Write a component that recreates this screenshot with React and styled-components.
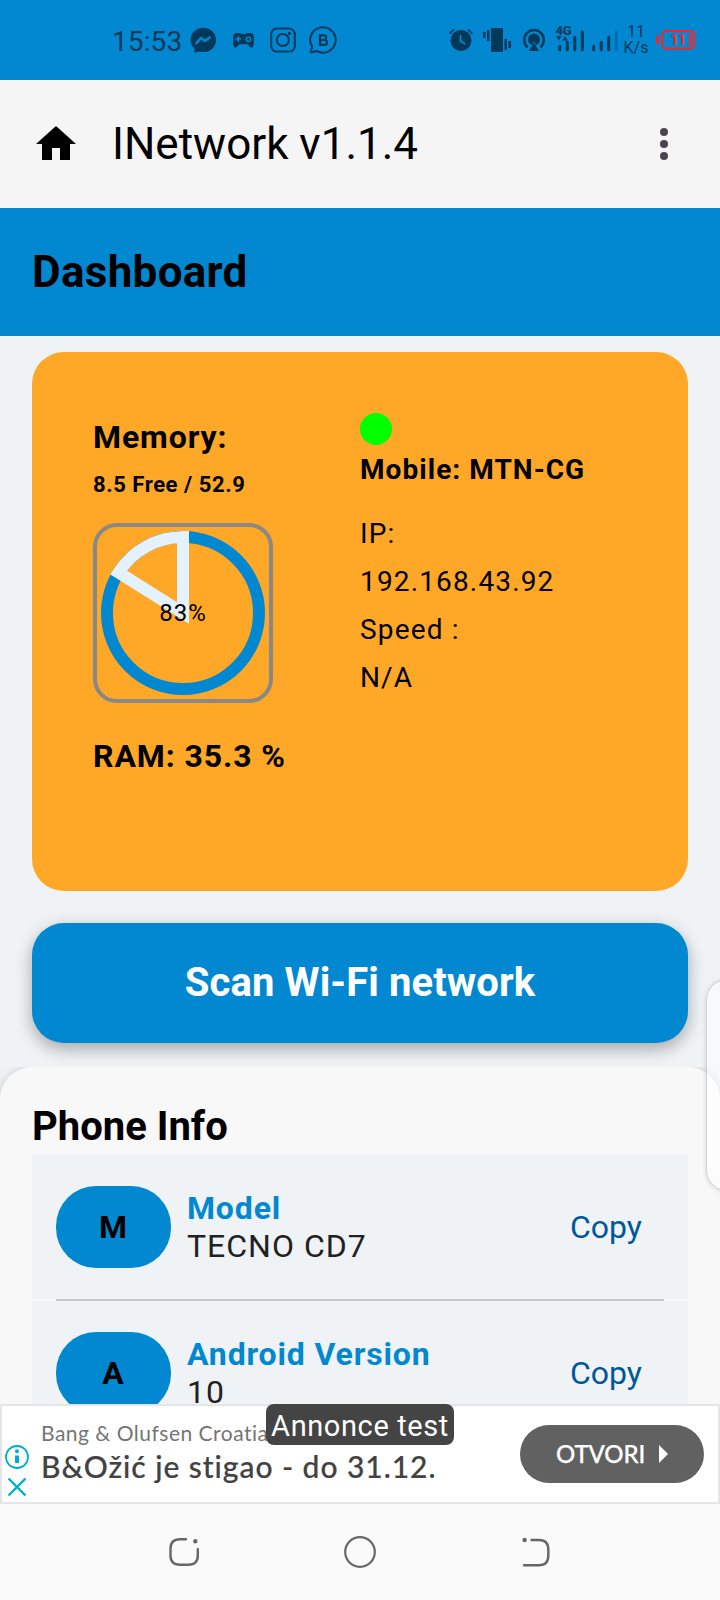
import React from "react";
import styled, { createGlobalStyle } from "styled-components";

const BLUE = "#0288d1";
const INK = "#01395a";

const phoneInfo = [
  { letter: "M", label: "Model", value: "TECNO CD7" },
  { letter: "A", label: "Android Version", value: "10" },
];

const LeftStatusIcons = () => (
  <svg width="148" height="30" viewBox="190 25 148 30" fill="none">
    {/* messenger */}
    <path
      d="M203.3 27.8c-7.2 0-12.7 5.2-12.7 12.2 0 3.6 1.5 6.4 3.9 8.5v4.4l4.3-1.4c1.4.4 2.9.6 4.5.6 7.2 0 12.7-5.2 12.7-12.2s-5.5-12.1-12.7-12.1Z"
      fill={INK}
    />
    <path d="M196.4 43.2l4.5-5.2 4 3 4.8-3.5" stroke={BLUE} strokeWidth="2.5" strokeLinejoin="round" strokeLinecap="round" />
    {/* gamepad */}
    <path
      d="M236.5 33h3.5l1.5 1h4l1.5-1h3.5c2.5 0 3.5 2 3.5 6 0 5.5-.5 8.7-2.5 8.7-2 0-3-3.4-4.5-3.4h-7c-1.5 0-2.5 3.4-4.5 3.4-2 0-2.5-3.2-2.5-8.7 0-4 1-6 3.5-6Z"
      fill={INK}
    />
    <path d="M238.3 36.3v5.4M235.6 39h5.4" stroke={BLUE} strokeWidth="1.7" />
    <circle cx="248.4" cy="39.3" r="2.2" stroke={BLUE} strokeWidth="1.4" />
    {/* instagram */}
    <rect x="271.2" y="28.6" width="23.6" height="23" rx="5.5" stroke={INK} strokeWidth="2" />
    <circle cx="282.8" cy="40" r="6" stroke={INK} strokeWidth="2" />
    <circle cx="289.5" cy="33.5" r="1.7" fill={INK} />
    {/* business chat */}
    <path d="M310.6 52.4l1.6-5.700a12.7 12.7 0 1 1 4.7 4.4Z" stroke={INK} strokeWidth="2" strokeLinejoin="round" />
    <path d="M320 35.3h3.8a2.3 2.3 0 0 1 0 4.7H320Zm0 4.700h4.5a2.45 2.45 0 0 1 0 4.900H320Z" stroke={INK} strokeWidth="2.2" />
  </svg>
);

const RightStatusIcons = () => (
  <svg width="171" height="40" viewBox="449 20 171 40" fill="none">
    {/* alarm */}
    <circle cx="461" cy="40.5" r="10.5" fill={INK} />
    <path d="M460.5 35v6l4.8 3" stroke={BLUE} strokeWidth="1.7" />
    <path d="M449.7 33.7l4.3-4.3M472.3 33.7l-4.3-4.3" stroke={INK} strokeWidth="1.8" />
    {/* vibrate */}
    <path d="M491 28h12v24h-12ZM483 32h2.5v6H483ZM487 30h2.5v11H487ZM504.5 39h2.5v11h-2.5ZM508.5 41h2.5v7h-2.5Z" fill={INK} />
    {/* hotspot */}
    <path d="M527.6 47.3a9.8 9.8 0 1 1 12.8 0" stroke={INK} strokeWidth="2.5" />
    <circle cx="534" cy="39.5" r="6" fill={INK} />
    <path d="M527.5 53l6.5-11.5 6.5 11.5Z" fill={BLUE} />
    <path d="M528.8 51l5.2-8.3 5.2 8.3Z" fill={INK} />
    {/* signal bars */}
    <text x="555.5" y="34.8" fontSize="13" fontWeight="800" letterSpacing="-0.3" fill={INK} fontFamily="Roboto, sans-serif">
      4G
    </text>
    <path d="M556 36h5.5l-2.7 4.5ZM562.3 40.5h5.4l-2.7-4.5Z" fill={INK} />
    <path d="M559.8 46.2v3.6M567.3 42.2v7.6M574.8 37.2v12.6M582.3 31.8v18" stroke={INK} strokeWidth="3" strokeLinecap="round" />
    <path d="M593.7 46.2v3.6M601.2 42.2v7.6M608.7 37.2v12.6" stroke={INK} strokeWidth="3" strokeLinecap="round" />
    <path d="M616.3 31.8v18" stroke="#026eab" strokeWidth="3" strokeLinecap="round" />
  </svg>
);

const Battery = () => (
  <svg width="40" height="20" viewBox="656 30 40 20" fill="none">
    <rect x="656" y="35.5" width="3" height="8.5" rx="1" fill="#ff2222" />
    <rect x="662.2" y="31" width="32" height="17.5" rx="3.5" stroke="#ff2222" strokeWidth="2" />
    <text x="670" y="45" fontSize="15" fontWeight="700" letterSpacing="-0.8" fill="#ff2222" fontFamily="Roboto, sans-serif">
      11
    </text>
    <path d="M690.5 33.5v12.5" stroke="#ff2222" strokeWidth="2.6" />
  </svg>
);

const HomeIcon = () => (
  <svg width="40" height="36" viewBox="0 0 40 36">
    <path d="M20 0 0 18h6v16h10V22h8v12h10V18h6Z" />
  </svg>
);

const MenuDots = () => (
  <svg width="8" height="32" viewBox="0 0 8 32" fill="#49454f">
    <circle cx="4" cy="4" r="4" />
    <circle cx="4" cy="16" r="4" />
    <circle cx="4" cy="28" r="4" />
  </svg>
);

const MemoryChart = ({ free, total }) => {
  const used = 1 - free / total;
  const angle = used * 2 * Math.PI;
  const x = 86 + 76 * Math.sin(angle);
  const y = 86 - 76 * Math.cos(angle);
  return (
    <ChartFrame>
      <svg width="172" height="172" viewBox="0 0 172 172" fill="none" strokeWidth="12">
        <circle cx="86" cy="86" r="76" stroke={BLUE} />
        <path d={`M86 86L${x} ${y}A76 76 0 0 1 86 10Z`} stroke="#e3f2fd" />
      </svg>
      <ChartLabel>{Math.floor(used * 100)}%</ChartLabel>
    </ChartFrame>
  );
};

const InfoRow = ({ letter, label, value }) => (
  <Row>
    <Badge>{letter}</Badge>
    <RowText>
      <RowLabel>{label}</RowLabel>
      <RowValue>{value}</RowValue>
    </RowText>
    <CopyButton>Copy</CopyButton>
  </Row>
);

const AdBanner = () => (
  <Ad>
    <AdMarks>
      <svg width="26" height="54" viewBox="0 0 26 54" fill="none" stroke="#00aecd">
        <circle cx="13" cy="13" r="11" strokeWidth="1.8" />
        <circle cx="13" cy="7.3" r="2" fill="#00aecd" stroke="none" />
        <path d="M11 11.5h4v7.5h-4Z" fill="#00aecd" stroke="none" />
        <path d="M4.5 34.5l17 17M21.5 34.5l-17 17" strokeWidth="2.4" />
      </svg>
    </AdMarks>
    <AdCopy>
      <Advertiser>Bang &amp; Olufsen Croatia</Advertiser>
      <Headline>B&amp;Ožić je stigao - do 31.12.</Headline>
    </AdCopy>
    <AdAction>
      OTVORI
      <svg width="9" height="18" viewBox="0 0 9 18" fill="#fff">
        <path d="M0 0 9 9 0 18Z" />
      </svg>
    </AdAction>
    <TestTag>Annonce test</TestTag>
  </Ad>
);

function App() {
  return (
    <Screen>
      <GlobalStyle />
      <StatusBar>
        <Clock>15:53</Clock>
        <LeftStatusIcons />
        <Spacer />
        <RightStatusIcons />
        <NetSpeed>
          <span>11</span>
          <span>K/s</span>
        </NetSpeed>
        <Battery />
      </StatusBar>
      <AppBar>
        <HomeIcon />
        <AppTitle>INetwork v1.1.4</AppTitle>
        <Spacer />
        <MenuDots />
      </AppBar>
      <PageTitle>Dashboard</PageTitle>
      <Content>
        <Card>
          <MemoryColumn>
            <CardHeading>Memory:</CardHeading>
            <MemoryFree>8.5 Free / 52.9</MemoryFree>
            <MemoryChart free={8.5} total={52.9} />
            <CardHeading $ram>RAM: 35.3 %</CardHeading>
          </MemoryColumn>
          <NetworkColumn>
            <Dot />
            <Carrier>Mobile: MTN-CG</Carrier>
            <NetworkLine>IP:</NetworkLine>
            <NetworkLine>192.168.43.92</NetworkLine>
            <NetworkLine>Speed :</NetworkLine>
            <NetworkLine>N/A</NetworkLine>
          </NetworkColumn>
        </Card>
        <ScanButton>Scan Wi-Fi network</ScanButton>
      </Content>
      <PanelClip>
        <Panel>
          <PanelTitle>Phone Info</PanelTitle>
          {phoneInfo.map((item, i) => (
            <React.Fragment key={item.label}>
              {i > 0 && <Divider />}
              <InfoRow {...item} />
            </React.Fragment>
          ))}
        </Panel>
      </PanelClip>
      <AdBanner />
      <NavBar>
        <svg width="32" height="32" viewBox="168 1536 32 32" fill="none" stroke="#666" strokeWidth="2.4" strokeLinecap="round">
          <path d="M186 1539.2h-6c-6 0-9.5 3.5-9.5 9.5v6.8c0 6 3.5 9.2 9.5 9.2h8.3c6 0 9.5-3.2 9.5-9.2v-6.3" />
          <circle cx="195.3" cy="1541.3" r="1" fill="#666" />
        </svg>
        <svg width="32" height="32" viewBox="344 1536 32 32" fill="none" stroke="#666" strokeWidth="2.2">
          <circle cx="360" cy="1552" r="14.8" />
        </svg>
        <svg width="32" height="32" viewBox="520 1536 32 32" fill="none" stroke="#666" strokeWidth="2.4" strokeLinecap="round">
          <path d="M531.5 1540h7.5c6 0 9.3 3.5 9.3 9.5v6.3c0 6-3.3 9.5-9.3 9.5h-15" />
          <circle cx="524.6" cy="1540" r="1" fill="#666" />
        </svg>
      </NavBar>
      <EdgeHandle />
    </Screen>
  );
}

const GlobalStyle = createGlobalStyle`
  * {
    box-sizing: border-box;
  }
  body {
    margin: 0;
  }
  svg {
    display: block;
    flex-shrink: 0;
  }
`;

const Screen = styled.div`
  position: relative;
  display: flex;
  flex-direction: column;
  width: 720px;
  height: 1600px;
  overflow: hidden;
  background: #eff3f6;
  color: #000;
  font-family: Roboto, sans-serif;
`;

const Spacer = styled.div`
  flex: 1;
`;

const StatusBar = styled.div`
  display: flex;
  align-items: center;
  height: 80px;
  padding: 0 24px 0 112px;
  background: ${BLUE};
  color: ${INK};
`;

const Clock = styled.div`
  width: 78px;
  padding-top: 3px;
  font-size: 28px;
  line-height: 32px;
  letter-spacing: 0.1px;
`;

const NetSpeed = styled.div`
  display: flex;
  flex-direction: column;
  align-items: center;
  width: 36px;
  padding-right: 4px;
  font-size: 16px;
  line-height: 16px;
`;

const AppBar = styled.div`
  display: flex;
  align-items: center;
  height: 128px;
  padding: 0 52px 0 36px;
  background: #f5f5f5;
`;

const AppTitle = styled.div`
  margin-left: 36px;
  font-size: 44px;
  line-height: 56px;
`;

const PageTitle = styled.div`
  height: 128px;
  padding-left: 32px;
  background: ${BLUE};
  font-size: 44px;
  font-weight: 700;
  line-height: 128px;
  letter-spacing: 0.3px;
`;

const Content = styled.div`
  height: 731px;
  padding: 16px 32px 0;
`;

const Card = styled.div`
  display: flex;
  height: 539px;
  border-radius: 32px;
  background: #ffa726;
`;

const MemoryColumn = styled.div`
  width: 328px;
  padding: 65px 0 0 61px;
`;

const CardHeading = styled.div`
  margin-top: ${(props) => (props.$ram ? "33px" : "0")};
  font-size: 32px;
  font-weight: 700;
  line-height: 40px;
  letter-spacing: 0.9px;
`;

const MemoryFree = styled.div`
  margin: 13px 0 24px;
  font-size: 22px;
  font-weight: 700;
  line-height: 29px;
  letter-spacing: 0.57px;
`;

const ChartFrame = styled.div`
  position: relative;
  width: 180px;
  height: 180px;
  border: 4px solid #888;
  border-radius: 24px;
`;

const ChartLabel = styled.div`
  position: absolute;
  inset: 0;
  font-size: 24px;
  line-height: 172px;
  letter-spacing: 1px;
  text-align: center;
`;

const NetworkColumn = styled.div`
  padding-top: 61px;
`;

const Dot = styled.div`
  width: 32px;
  height: 32px;
  border-radius: 50%;
  background: #00ff00;
`;

const Carrier = styled.div`
  margin-top: 1px;
  margin-bottom: 16px;
  font-size: 28px;
  font-weight: 700;
  line-height: 48px;
  letter-spacing: 1.05px;
`;

const NetworkLine = styled.div`
  font-size: 28px;
  line-height: 48px;
  letter-spacing: 1.15px;
`;

const ScanButton = styled.button`
  display: block;
  width: 100%;
  height: 120px;
  margin-top: 32px;
  padding: 0 0 2px;
  border: 0;
  border-radius: 32px;
  background: ${BLUE};
  box-shadow: 0 7px 16px rgba(0, 0, 0, 0.26), 0 0 20px rgba(0, 0, 0, 0.06);
  color: #fff;
  font-family: inherit;
  font-size: 40px;
  font-weight: 700;
  letter-spacing: 0.1px;
`;

const PanelClip = styled.div`
  position: relative;
  height: 337px;
  overflow: hidden;
`;

const Panel = styled.div`
  height: 533px;
  padding: 31px 32px 0;
  border-radius: 32px 32px 0 0;
  background: #f8f8f8;
  box-shadow: 0 2px 12px rgba(0, 0, 0, 0.2);
`;

const PanelTitle = styled.div`
  height: 57px;
  font-size: 40px;
  font-weight: 700;
  line-height: 58px;
`;

const Divider = styled.div`
  height: 2px;
  margin: 0 24px;
  background: #c8c8c9;
`;

const Row = styled.div`
  display: flex;
  align-items: center;
  height: 144px;
  padding: 0 46px 0 24px;
  background: #eff3f6;
`;

const Badge = styled.div`
  width: 115px;
  height: 82px;
  padding-right: 1px;
  border-radius: 40px;
  background: ${BLUE};
  font-size: 32px;
  font-weight: 700;
  line-height: 82px;
  text-align: center;
`;

const RowText = styled.div`
  flex: 1;
  margin-left: 16px;
  font-size: 32px;
  line-height: 38px;
  letter-spacing: 1px;
`;

const RowLabel = styled.div`
  color: ${BLUE};
  font-weight: 700;
  letter-spacing: 0.85px;
`;

const RowValue = styled.div`
  color: #212121;
`;

const CopyButton = styled.button`
  padding: 0;
  border: 0;
  background: none;
  color: #01579b;
  font-family: inherit;
  font-size: 32px;
  line-height: 40px;
`;

const Ad = styled.div`
  position: relative;
  display: flex;
  height: 100px;
  border: 2px solid #e4e5e7;
  background: #fff;
  font-family: Lato, sans-serif;
`;

const AdMarks = styled.div`
  width: 39px;
  padding: 38px 0 0 2px;
`;

const AdCopy = styled.div`
  flex: 1;
  padding-top: 12px;
  white-space: nowrap;
`;

const Advertiser = styled.div`
  color: #757575;
  font-size: 21px;
  line-height: 30px;
  letter-spacing: 0.5px;
`;

const Headline = styled.div`
  color: #424242;
  font-size: 30px;
  font-weight: 500;
  line-height: 36px;
  letter-spacing: 0.95px;
  -webkit-text-stroke: 0.2px #424242;
`;

const AdAction = styled.div`
  display: flex;
  align-items: center;
  gap: 14px;
  width: 184px;
  height: 58px;
  margin: 19px 14px 0 0;
  padding: 0 0 1px 36px;
  border-radius: 29px;
  background: #616161;
  color: #fff;
  font-size: 24px;
  font-weight: 500;
  letter-spacing: -0.1px;
  -webkit-text-stroke: 0.25px #fff;
`;

const TestTag = styled.div`
  position: absolute;
  top: -2px;
  left: 264px;
  width: 188px;
  height: 41px;
  border-radius: 8px;
  background: #444;
  color: #fff;
  font-family: Roboto, sans-serif;
  font-size: 29px;
  line-height: 44px;
  text-align: center;
  letter-spacing: 0.6px;
`;

const NavBar = styled.div`
  display: flex;
  align-items: center;
  justify-content: space-between;
  height: 96px;
  padding: 0 168px;
  background: #fafafa;
`;

// pull-out tab of the system side panel, floats over everything
const EdgeHandle = styled.div`
  position: absolute;
  top: 979px;
  right: -28px;
  width: 42px;
  height: 212px;
  border: 1px solid rgba(0, 0, 0, 0.16);
  border-radius: 32px;
  background: rgba(255, 255, 255, 0.5);
  box-shadow: 0 1px 5px rgba(0, 0, 0, 0.14);
`;

export default App;
